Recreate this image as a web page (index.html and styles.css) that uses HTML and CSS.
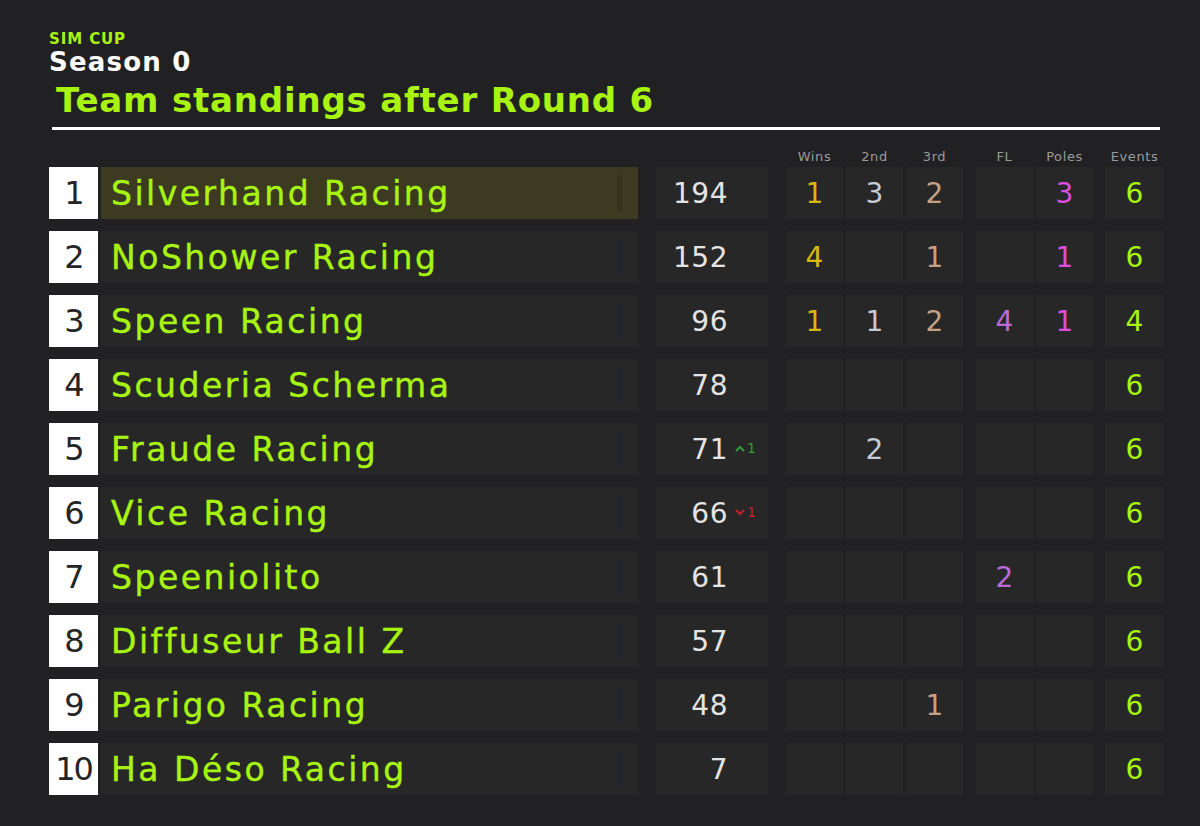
FILE: index.html
```html
<!DOCTYPE html>
<html>
<head>
<meta charset="utf-8">
<link rel="stylesheet" href="styles.css">
</head>
<body>
<div class="page">
  <header class="head">
    <div class="kicker">SIM CUP</div>
    <div class="season">Season 0</div>
    <h1 class="title">Team standings after Round 6</h1>
    <div class="rule"></div>
  </header>

  <div class="table">
    <div class="labels">
      <div class="lab-spacer"></div>
      <div class="group g1"><span class="lab">Wins</span><span class="lab">2nd</span><span class="lab">3rd</span></div>
      <div class="group g2"><span class="lab">FL</span><span class="lab">Poles</span></div>
      <span class="lab ev">Events</span>
    </div>

    <div class="row">
      <div class="rank">1</div>
      <div class="name lead"><span>Silverhand Racing</span><i class="bar bar-lead"></i></div>
      <div class="pts"><span class="pv">194</span><span class="chg"></span></div>
      <div class="group g1"><span class="c wins">1</span><span class="c second">3</span><span class="c third">2</span></div>
      <div class="group g2"><span class="c fl"></span><span class="c poles">3</span></div>
      <span class="c ev events">6</span>
    </div>

    <div class="row">
      <div class="rank">2</div>
      <div class="name"><span>NoShower Racing</span><i class="bar"></i></div>
      <div class="pts"><span class="pv">152</span><span class="chg"></span></div>
      <div class="group g1"><span class="c wins">4</span><span class="c second"></span><span class="c third">1</span></div>
      <div class="group g2"><span class="c fl"></span><span class="c poles">1</span></div>
      <span class="c ev events">6</span>
    </div>

    <div class="row">
      <div class="rank">3</div>
      <div class="name"><span>Speen Racing</span><i class="bar"></i></div>
      <div class="pts"><span class="pv">96</span><span class="chg"></span></div>
      <div class="group g1"><span class="c wins">1</span><span class="c second">1</span><span class="c third">2</span></div>
      <div class="group g2"><span class="c fl">4</span><span class="c poles">1</span></div>
      <span class="c ev events">4</span>
    </div>

    <div class="row">
      <div class="rank">4</div>
      <div class="name"><span>Scuderia Scherma</span><i class="bar"></i></div>
      <div class="pts"><span class="pv">78</span><span class="chg"></span></div>
      <div class="group g1"><span class="c wins"></span><span class="c second"></span><span class="c third"></span></div>
      <div class="group g2"><span class="c fl"></span><span class="c poles"></span></div>
      <span class="c ev events">6</span>
    </div>

    <div class="row">
      <div class="rank">5</div>
      <div class="name"><span>Fraude Racing</span><i class="bar"></i></div>
      <div class="pts"><span class="pv">71</span><span class="chg up"><svg class="chev" width="10" height="7" viewBox="0 0 10 7"><path d="M1 6 L5 2 L9 6" fill="none" stroke="currentColor" stroke-width="2"/></svg><span>1</span></span></div>
      <div class="group g1"><span class="c wins"></span><span class="c second">2</span><span class="c third"></span></div>
      <div class="group g2"><span class="c fl"></span><span class="c poles"></span></div>
      <span class="c ev events">6</span>
    </div>

    <div class="row">
      <div class="rank">6</div>
      <div class="name"><span>Vice Racing</span><i class="bar"></i></div>
      <div class="pts"><span class="pv">66</span><span class="chg down"><svg class="chev" width="10" height="7" viewBox="0 0 10 7"><path d="M1 1 L5 5 L9 1" fill="none" stroke="currentColor" stroke-width="2"/></svg><span>1</span></span></div>
      <div class="group g1"><span class="c wins"></span><span class="c second"></span><span class="c third"></span></div>
      <div class="group g2"><span class="c fl"></span><span class="c poles"></span></div>
      <span class="c ev events">6</span>
    </div>

    <div class="row">
      <div class="rank">7</div>
      <div class="name"><span>Speeniolito</span><i class="bar"></i></div>
      <div class="pts"><span class="pv">61</span><span class="chg"></span></div>
      <div class="group g1"><span class="c wins"></span><span class="c second"></span><span class="c third"></span></div>
      <div class="group g2"><span class="c fl">2</span><span class="c poles"></span></div>
      <span class="c ev events">6</span>
    </div>

    <div class="row">
      <div class="rank">8</div>
      <div class="name"><span>Diffuseur Ball Z</span><i class="bar"></i></div>
      <div class="pts"><span class="pv">57</span><span class="chg"></span></div>
      <div class="group g1"><span class="c wins"></span><span class="c second"></span><span class="c third"></span></div>
      <div class="group g2"><span class="c fl"></span><span class="c poles"></span></div>
      <span class="c ev events">6</span>
    </div>

    <div class="row">
      <div class="rank">9</div>
      <div class="name"><span>Parigo Racing</span><i class="bar"></i></div>
      <div class="pts"><span class="pv">48</span><span class="chg"></span></div>
      <div class="group g1"><span class="c wins"></span><span class="c second"></span><span class="c third">1</span></div>
      <div class="group g2"><span class="c fl"></span><span class="c poles"></span></div>
      <span class="c ev events">6</span>
    </div>

    <div class="row">
      <div class="rank">10</div>
      <div class="name"><span>Ha Déso Racing</span><i class="bar"></i></div>
      <div class="pts"><span class="pv">7</span><span class="chg"></span></div>
      <div class="group g1"><span class="c wins"></span><span class="c second"></span><span class="c third"></span></div>
      <div class="group g2"><span class="c fl"></span><span class="c poles"></span></div>
      <span class="c ev events">6</span>
    </div>
  </div>
</div>
</body>
</html>
```

FILE: styles.css
```css
html, body {
  margin: 0;
  padding: 0;
  background: #212123;
}
body {
  width: 1200px;
  height: 826px;
  overflow: hidden;
  font-family: "DejaVu Sans", sans-serif;
}
.page {
  padding: 31px 0 0 49px;
}
.head {
  display: flex;
  flex-direction: column;
}
.kicker {
  color: #a8f312;
  font-weight: bold;
  font-size: 15px;
  line-height: 16px;
  letter-spacing: 0.9px;
}
.season {
  margin-top: 1px;
  color: #ffffff;
  font-weight: bold;
  font-size: 26px;
  line-height: 28px;
  letter-spacing: 1.2px;
}
.title {
  margin: 4px 0 0 7px;
  color: #a8f312;
  font-weight: bold;
  font-size: 34px;
  line-height: 40px;
  letter-spacing: 0.8px;
}
.rule {
  margin: 7px 0 0 3px;
  width: 1108px;
  height: 3px;
  background: #ffffff;
}
.table {
  margin-top: 15px;
}
.labels {
  display: flex;
  height: 22px;
  align-items: center;
}
.lab-spacer {
  width: 737px;
}
.lab {
  width: 57px;
  text-align: center;
  color: #9a9a9a;
  font-size: 13px;
  letter-spacing: 0.6px;
}
.group {
  display: flex;
  gap: 3px;
}
.g2 {
  margin-left: 13px;
}
.ev {
  margin-left: 12px;
  width: 59px;
}
.row {
  display: flex;
  height: 52px;
  margin-bottom: 12px;
}
.rank {
  width: 49px;
  background: #ffffff;
  color: #252525;
  font-size: 32px;
  display: flex;
  align-items: center;
  justify-content: center;
  letter-spacing: -2px;
}
.name {
  margin-left: 3px;
  width: 537px;
  background: #272727;
  display: flex;
  align-items: center;
  justify-content: space-between;
  padding: 0 16px 0 10px;
  box-sizing: border-box;
  color: #a8f312;
  font-size: 33px;
  letter-spacing: 2.5px;
  -webkit-text-stroke: 0.4px #a8f312;
}
.name.lead {
  background: #3c3a21;
}
.bar {
  width: 5px;
  height: 36px;
  background: #23232b;
}
.bar-lead {
  background: #35331d;
}
.pts {
  margin-left: 18px;
  width: 112px;
  background: #272727;
  display: flex;
  align-items: center;
  justify-content: flex-end;
  color: #e4e4e4;
  font-size: 28px;
  letter-spacing: 0.5px;
}
.chg {
  width: 40px;
  padding-left: 7px;
  box-sizing: border-box;
  display: flex;
  align-items: center;
  gap: 2px;
  font-size: 14px;
  margin-top: -2px;
}
.chev {
  display: block;
}
.up { color: #2f9b36; }
.down { color: #c2212a; }
.row .g1 {
  margin-left: 18px;
}
.c {
  width: 57px;
  background: #272727;
  display: flex;
  align-items: center;
  justify-content: center;
  font-size: 28px;
}
.c.ev {
  width: 59px;
}
.wins { color: #d9b712; }
.second { color: #c6cbd3; }
.third { color: #c9a083; }
.fl { color: #b96bd6; }
.poles { color: #dd4ee0; }
.events { color: #a8f312; }
```
